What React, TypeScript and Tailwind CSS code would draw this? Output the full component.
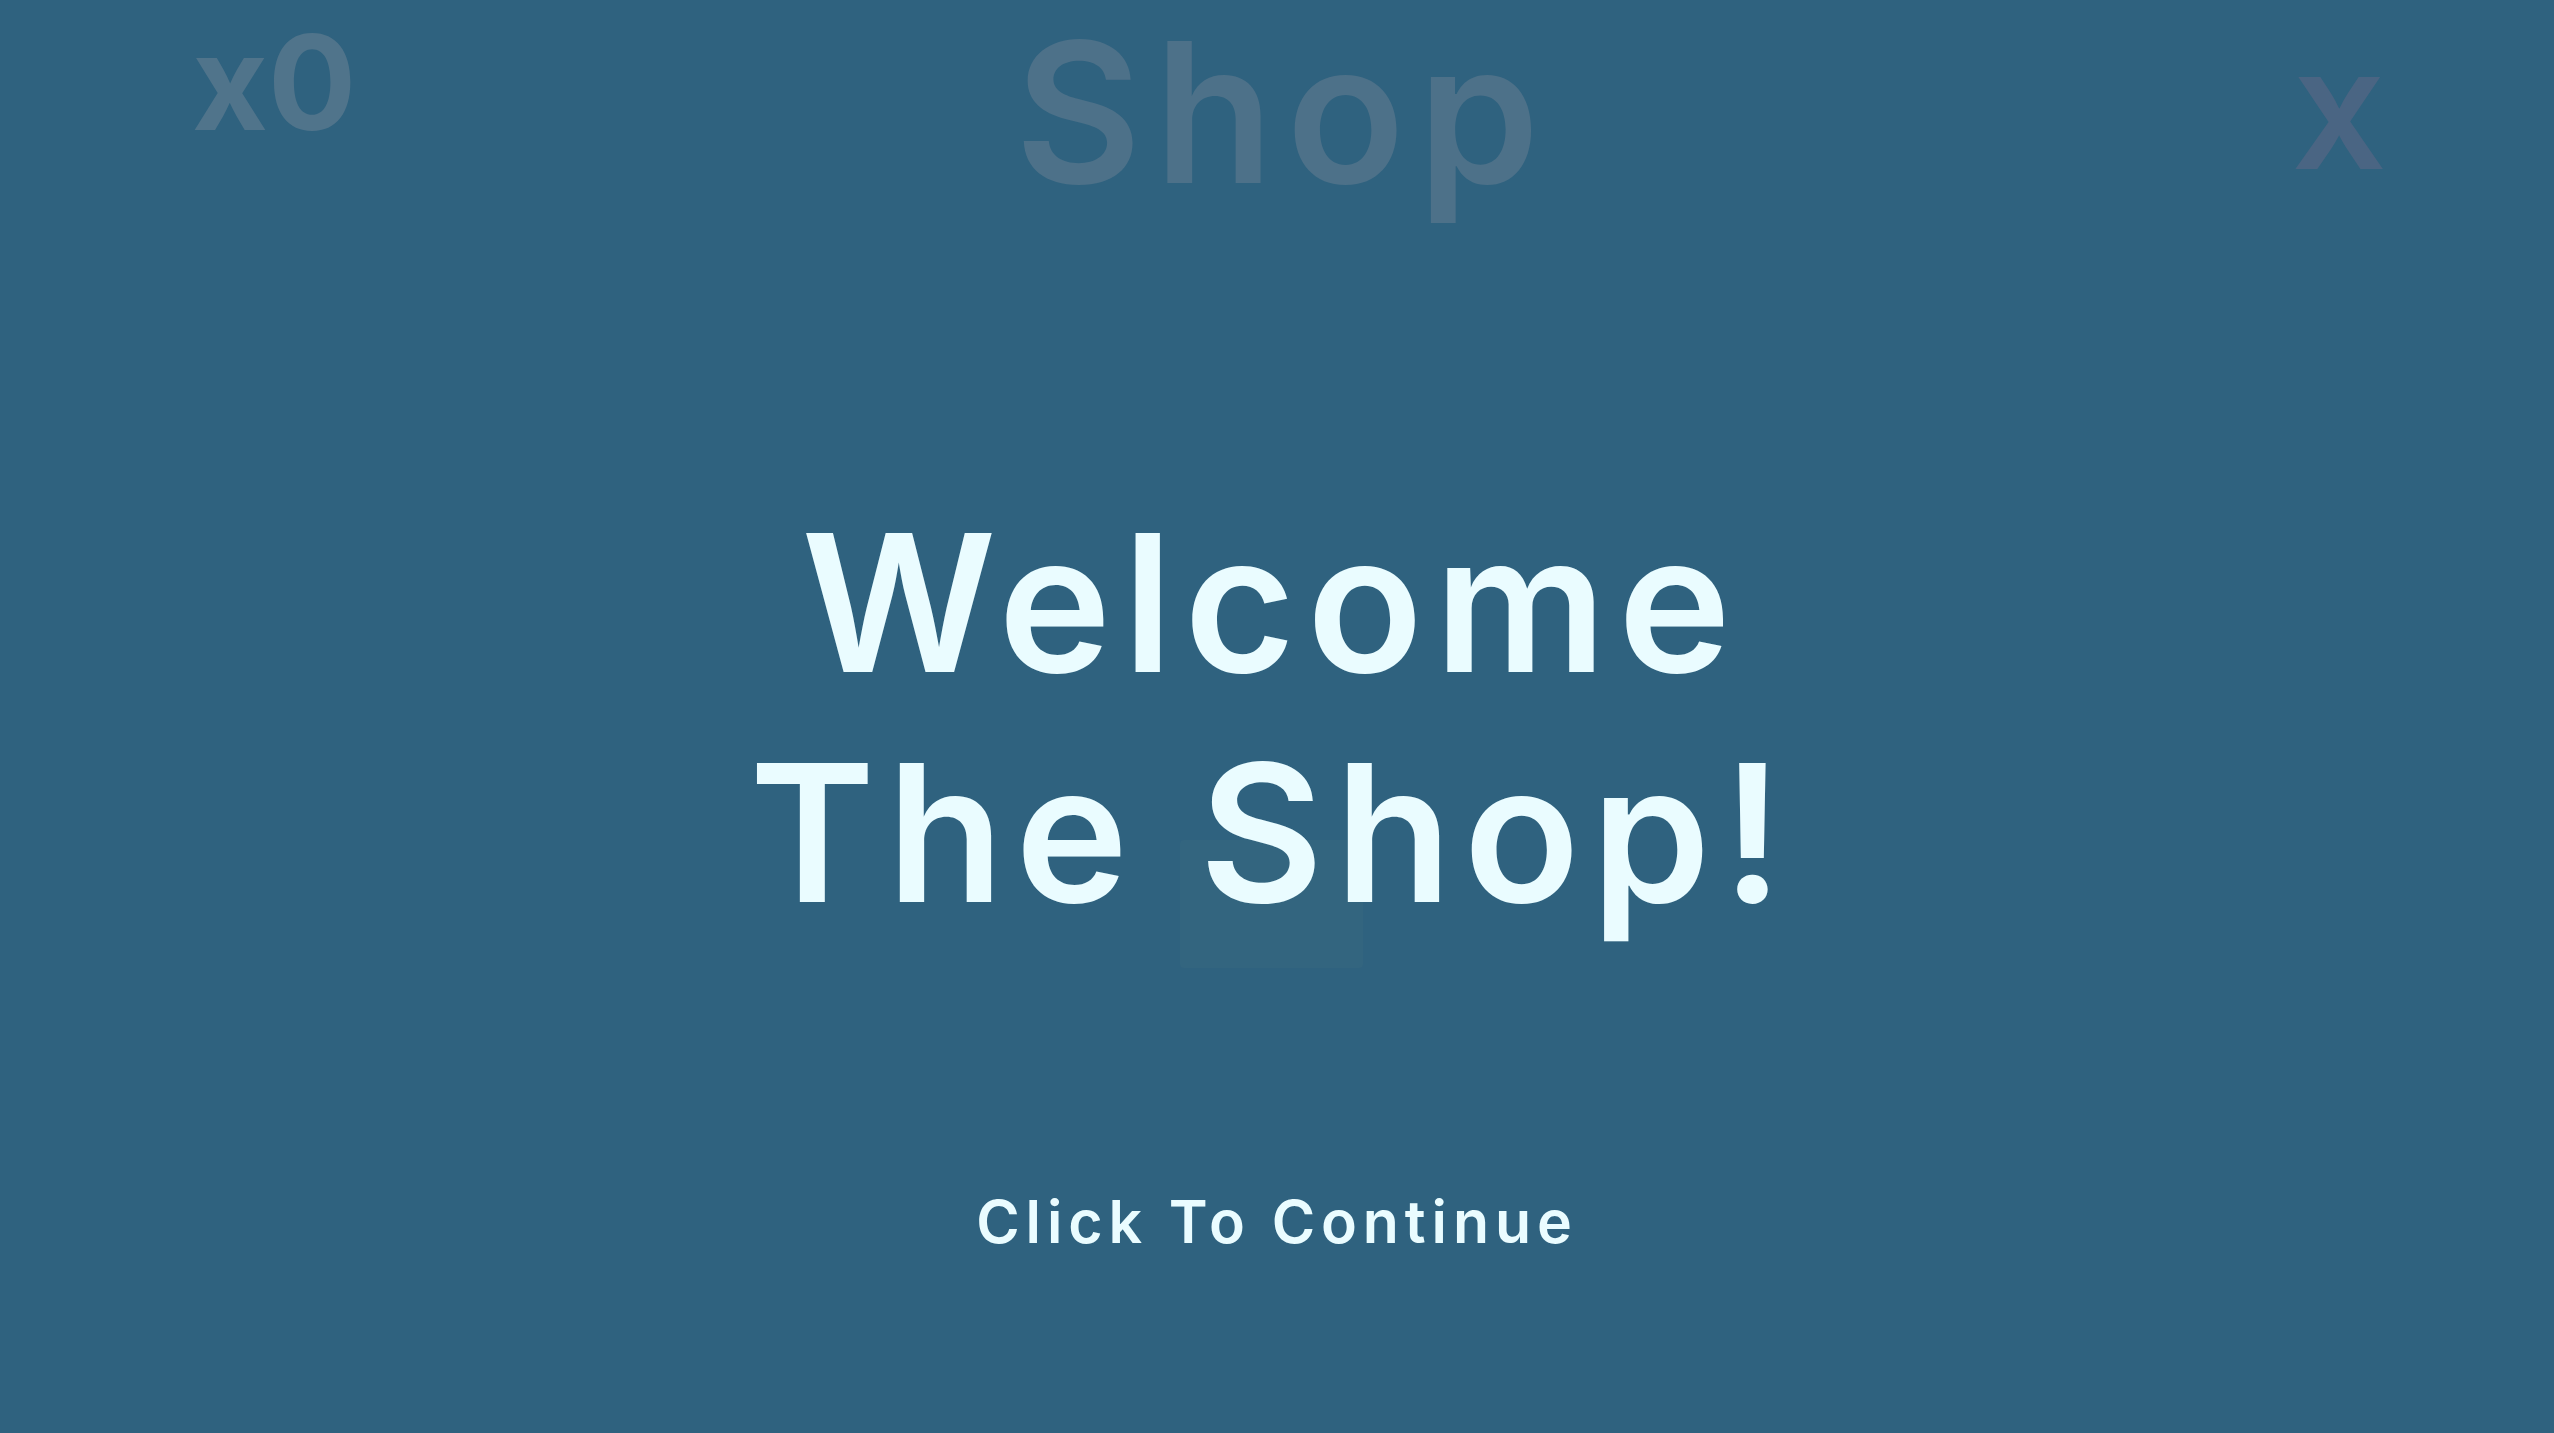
import React from "react";

export default function App() {
  return (
    <div className="w-full h-[1433px] bg-[#2f627f] flex flex-col overflow-hidden select-none" style={{ fontFamily: "Inter, Roboto, sans-serif" }}>
      {/* Header */}
      <div className="grid grid-cols-[1fr_auto_1fr] items-start h-[214px]">
        <div className="pl-[192px] mt-[3px]">
          <span className="block text-[131px] leading-[1.22] font-bold text-[#50748b]">
            x0
          </span>
        </div>
        <div>
          <span className="block text-[195px] leading-[1.15] font-semibold tracking-[0.065em] pl-[0.065em] text-[#4d7189]">
            Shop
          </span>
        </div>
        <div className="flex justify-end pr-[168px] mt-[46px]">
          <span className="block text-[127px] leading-[1.22] font-bold text-[#4a6583]">
            X
          </span>
        </div>
      </div>

      {/* Welcome text */}
      <div className="relative mt-[274px] flex flex-col items-center">
        <div className="absolute left-[1180px] top-[352px] w-[183px] h-[128px] rounded-[4px] bg-[#33657f]" />
        <p className="relative pr-[10px] text-center text-[191px] leading-[230px] font-semibold tracking-[0.06em] text-[#eafcff]">
          Welcome
          <br />
          The Shop!
        </p>
      </div>

      {/* Click to continue */}
      <div className="mt-[244px] flex justify-center">
        <span className="block text-[59px] leading-none font-semibold tracking-[0.1em] text-[#eafcff]">
          Click To Continue
        </span>
      </div>
    </div>
  );
}
